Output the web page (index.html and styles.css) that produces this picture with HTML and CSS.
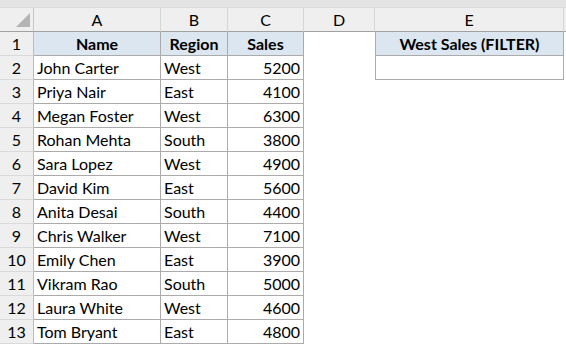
FILE: index.html
```html
<!DOCTYPE html>
<html>
<head>
<meta charset="utf-8">
<link rel="stylesheet" href="styles.css">
</head>
<body>
<div class="topbar"></div>
<div class="sheet">
  <div class="ch corner"><span class="tri"></span></div>
  <div class="ch">A</div>
  <div class="ch">B</div>
  <div class="ch">C</div>
  <div class="ch">D</div>
  <div class="ch">E</div>
  <div class="ch rest"></div>

  <div class="rh">1</div>
  <div class="c hd">Name</div>
  <div class="c hd">Region</div>
  <div class="c hd">Sales</div>
  <div class="e"></div>
  <div class="c hd ecol">West Sales (FILTER)</div>
  <div class="e"></div>

  <div class="rh">2</div>
  <div class="c">John Carter</div>
  <div class="c">West</div>
  <div class="c num">5200</div>
  <div class="e"></div>
  <div class="c ecol"></div>
  <div class="e"></div>

  <div class="rh">3</div>
  <div class="c">Priya Nair</div>
  <div class="c">East</div>
  <div class="c num">4100</div>
  <div class="e"></div><div class="e"></div><div class="e"></div>

  <div class="rh">4</div>
  <div class="c">Megan Foster</div>
  <div class="c">West</div>
  <div class="c num">6300</div>
  <div class="e"></div><div class="e"></div><div class="e"></div>

  <div class="rh">5</div>
  <div class="c">Rohan Mehta</div>
  <div class="c">South</div>
  <div class="c num">3800</div>
  <div class="e"></div><div class="e"></div><div class="e"></div>

  <div class="rh">6</div>
  <div class="c">Sara Lopez</div>
  <div class="c">West</div>
  <div class="c num">4900</div>
  <div class="e"></div><div class="e"></div><div class="e"></div>

  <div class="rh">7</div>
  <div class="c">David Kim</div>
  <div class="c">East</div>
  <div class="c num">5600</div>
  <div class="e"></div><div class="e"></div><div class="e"></div>

  <div class="rh">8</div>
  <div class="c">Anita Desai</div>
  <div class="c">South</div>
  <div class="c num">4400</div>
  <div class="e"></div><div class="e"></div><div class="e"></div>

  <div class="rh">9</div>
  <div class="c">Chris Walker</div>
  <div class="c">West</div>
  <div class="c num">7100</div>
  <div class="e"></div><div class="e"></div><div class="e"></div>

  <div class="rh">10</div>
  <div class="c">Emily Chen</div>
  <div class="c">East</div>
  <div class="c num">3900</div>
  <div class="e"></div><div class="e"></div><div class="e"></div>

  <div class="rh">11</div>
  <div class="c">Vikram Rao</div>
  <div class="c">South</div>
  <div class="c num">5000</div>
  <div class="e"></div><div class="e"></div><div class="e"></div>

  <div class="rh">12</div>
  <div class="c">Laura White</div>
  <div class="c">West</div>
  <div class="c num">4600</div>
  <div class="e"></div><div class="e"></div><div class="e"></div>

  <div class="rh">13</div>
  <div class="c">Tom Bryant</div>
  <div class="c">East</div>
  <div class="c num">4800</div>
  <div class="e"></div><div class="e"></div><div class="e"></div>
</div>
</body>
</html>
```

FILE: styles.css
```css
* { box-sizing: border-box; }
html, body {
  margin: 0;
  padding: 0;
  background: #ffffff;
  width: 566px;
  height: 345px;
  overflow: hidden;
}
body {
  font-family: Lato, "Liberation Sans", sans-serif;
  font-size: 16px;
  color: #000000;
}
.topbar {
  height: 8px;
  background: #e4e4e4;
  border-bottom: 1px solid #dcdcdc;
}
.sheet {
  display: grid;
  grid-template-columns: 34px 127px 67px 76px 71px 189px 1fr;
  grid-auto-rows: 24px;
}
.ch {
  background: #efefef;
  border-right: 1px solid #d6d6d6;
  border-bottom: 1px solid #a0a0a0;
  display: flex;
  align-items: center;
  justify-content: center;
  line-height: 1;
  padding-top: 1px;
}
.ch.rest { border-right: none; }
.corner {
  position: relative;
  border-right: 1px solid #c6c6c6;
}
.tri {
  position: absolute;
  right: 3px;
  bottom: 4px;
  width: 0;
  height: 0;
  border-left: 14px solid transparent;
  border-bottom: 14px solid #b4b4b4;
}
.rh {
  background: #efefef;
  border-right: 1px solid #bcbcbc;
  border-bottom: 1px solid #dadada;
  display: flex;
  align-items: center;
  justify-content: center;
}
.c {
  border-right: 1px solid #ababab;
  border-bottom: 1px solid #ababab;
  display: flex;
  align-items: center;
  padding: 0 3px;
  white-space: nowrap;
}
.hd {
  background: #dce6f1;
  font-weight: bold;
  justify-content: center;
}
.num { justify-content: flex-end; }
.ecol { border-left: 1px solid #ababab; }
.e { }
```
